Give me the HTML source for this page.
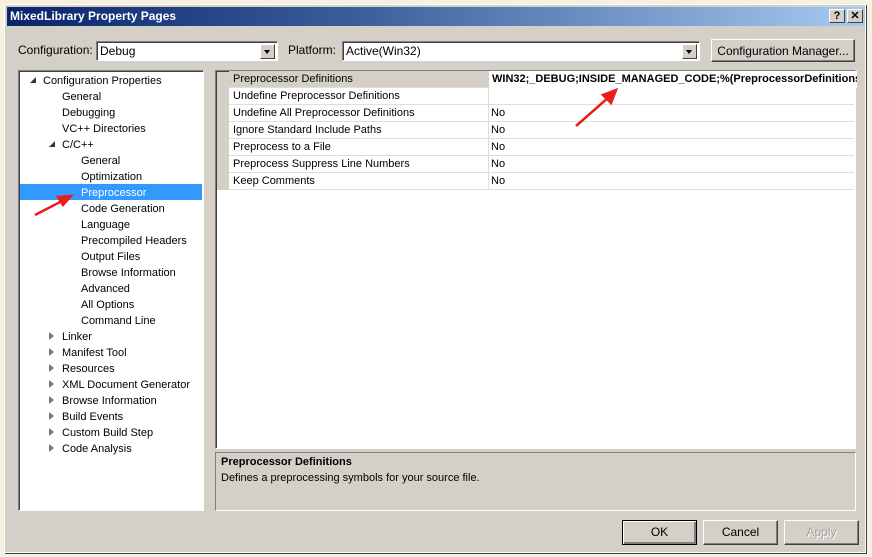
<!DOCTYPE html>
<html><head><style>
body{margin:0;width:872px;height:557px;background:#f4f1de;position:relative;overflow:hidden;font-family:"Liberation Sans",sans-serif;font-size:11px;color:#000}
.a{position:absolute}
.win{left:4px;top:4px;width:862px;height:549px;background:#d4d0c8;border:1px solid #fff;box-shadow:1px 1px 0 #404040;box-sizing:border-box}
.title{left:7px;top:7px;width:858px;height:19px;background:linear-gradient(90deg,#0a246a,#3a5d9a 40%,#a6caf0);color:#fff;font-weight:bold;font-size:12px;line-height:19px;padding-left:3px;box-sizing:border-box}
.tb{width:16px;height:14px;background:#d4d0c8;border:1px solid;border-color:#fff #404040 #404040 #fff;box-sizing:border-box;font-size:11px;font-weight:bold;text-align:center;line-height:12px;color:#000}
.combo{background:#fff;border:1px solid;border-color:#808080 #fff #fff #808080;box-shadow:inset 1px 1px 0 #404040;box-sizing:border-box;line-height:18px;padding-left:3px}
.dd{position:absolute;right:2px;top:2px;width:15px;height:15px;background:#d4d0c8;border:1px solid;border-color:#fff #404040 #404040 #fff;box-sizing:border-box}
.dd:after{content:"";position:absolute;left:3px;top:5px;border:3.5px solid transparent;border-top:4px solid #000}
.btn{background:#d4d0c8;border:1px solid;border-color:#fff #404040 #404040 #fff;box-shadow:inset -1px -1px 0 #808080;box-sizing:border-box;text-align:center;line-height:22px;font-size:12px}
.sunk{border:1px solid;border-color:#808080 #fff #fff #808080;box-shadow:inset 1px 1px 0 #404040;box-sizing:border-box}
.tr{position:absolute;height:16px;line-height:18px;white-space:nowrap}
.row{position:absolute;left:229px;width:625px;height:17px;border-bottom:1px solid #e0ded8;box-sizing:border-box;line-height:17px}
.row span{position:absolute}
.row .n{left:4px}.row .v{left:262px}
.row .sep{position:absolute;left:259px;top:0;width:1px;height:17px;background:#e0ded8}
.ex,.co{position:absolute;width:0;height:0}
.co{border-left:6px solid transparent;border-bottom:6px solid #333;border-right:0}
.ex{border-top:4px solid transparent;border-bottom:4px solid transparent;border-left:5px solid #777}
</style></head><body>
<div class="a win"></div>
<div class="a title">MixedLibrary Property Pages</div>
<div class="a tb" style="left:829px;top:9px">?</div>
<div class="a tb" style="left:847px;top:9px">✕</div>

<div class="a" style="left:18px;top:43px;font-size:12px">Configuration:</div>
<div class="a combo" style="left:96px;top:41px;width:182px;height:20px;font-size:12px">Debug<div class="dd"></div></div>
<div class="a" style="left:288px;top:43px;font-size:12px">Platform:</div>
<div class="a combo" style="left:342px;top:41px;width:358px;height:20px;font-size:12px">Active(Win32)<div class="dd"></div></div>
<div class="a btn" style="left:711px;top:39px;width:144px;height:23px">Configuration Manager...</div>

<div class="a sunk" style="left:18px;top:70px;width:186px;height:441px;background:#fff"></div>
<div class="a" style="left:20px;top:184px;width:182px;height:16px;background:#3399ff"></div>
<div class="co" style="left:30px;top:77px;position:absolute"></div>
<div class="co" style="left:49px;top:141px;position:absolute"></div>
<div class="tr" style="left:43px;top:72px">Configuration Properties</div>
<div class="tr" style="left:62px;top:88px">General</div>
<div class="tr" style="left:62px;top:104px">Debugging</div>
<div class="tr" style="left:62px;top:120px">VC++ Directories</div>
<div class="tr" style="left:62px;top:136px">C/C++</div>
<div class="tr" style="left:81px;top:152px">General</div>
<div class="tr" style="left:81px;top:168px">Optimization</div>
<div class="tr" style="left:81px;top:184px;color:#fff">Preprocessor</div>
<div class="tr" style="left:81px;top:200px">Code Generation</div>
<div class="tr" style="left:81px;top:216px">Language</div>
<div class="tr" style="left:81px;top:232px">Precompiled Headers</div>
<div class="tr" style="left:81px;top:248px">Output Files</div>
<div class="tr" style="left:81px;top:264px">Browse Information</div>
<div class="tr" style="left:81px;top:280px">Advanced</div>
<div class="tr" style="left:81px;top:296px">All Options</div>
<div class="tr" style="left:81px;top:312px">Command Line</div>
<div class="tr" style="left:62px;top:328px">Linker</div>
<div class="tr" style="left:62px;top:344px">Manifest Tool</div>
<div class="tr" style="left:62px;top:360px">Resources</div>
<div class="tr" style="left:62px;top:376px">XML Document Generator</div>
<div class="tr" style="left:62px;top:392px">Browse Information</div>
<div class="tr" style="left:62px;top:408px">Build Events</div>
<div class="tr" style="left:62px;top:424px">Custom Build Step</div>
<div class="tr" style="left:62px;top:440px">Code Analysis</div>
<div class="ex" style="left:49px;top:332px"></div>
<div class="ex" style="left:49px;top:348px"></div>
<div class="ex" style="left:49px;top:364px"></div>
<div class="ex" style="left:49px;top:380px"></div>
<div class="ex" style="left:49px;top:396px"></div>
<div class="ex" style="left:49px;top:412px"></div>
<div class="ex" style="left:49px;top:428px"></div>
<div class="ex" style="left:49px;top:444px"></div>

<div class="a sunk" style="left:215px;top:70px;width:641px;height:379px;background:#fff"></div>
<div class="a" style="left:217px;top:72px;width:12px;height:118px;background:#d4d0c8"></div>
<div class="row" style="top:71px;background:#d4d0c8"><span class="n">Preprocessor Definitions</span><span class="v" style="font-weight:bold;font-size:11px;left:260px;background:#fff;width:365px;height:17px;top:0;padding-left:3px;white-space:nowrap;overflow:hidden">WIN32;_DEBUG;INSIDE_MANAGED_CODE;%(PreprocessorDefinitions)</span></div>
<div class="row" style="top:88px"><div class="sep"></div><span class="n">Undefine Preprocessor Definitions</span></div>
<div class="row" style="top:105px"><div class="sep"></div><span class="n">Undefine All Preprocessor Definitions</span><span class="v">No</span></div>
<div class="row" style="top:122px"><div class="sep"></div><span class="n">Ignore Standard Include Paths</span><span class="v">No</span></div>
<div class="row" style="top:139px"><div class="sep"></div><span class="n">Preprocess to a File</span><span class="v">No</span></div>
<div class="row" style="top:156px"><div class="sep"></div><span class="n">Preprocess Suppress Line Numbers</span><span class="v">No</span></div>
<div class="row" style="top:173px"><div class="sep"></div><span class="n">Keep Comments</span><span class="v">No</span></div>

<div class="a sunk" style="left:215px;top:452px;width:641px;height:59px;background:#d4d0c8;box-shadow:none"></div>
<div class="a" style="left:221px;top:456px;font-weight:bold">Preprocessor Definitions</div>
<div class="a" style="left:221px;top:472px">Defines a preprocessing symbols for your source file.</div>

<div class="a btn" style="left:622px;top:520px;width:75px;height:25px;border:1px solid #000;box-shadow:inset 1px 1px 0 #fff,inset -2px -2px 0 #808080">OK</div>
<div class="a btn" style="left:703px;top:520px;width:75px;height:25px">Cancel</div>
<div class="a btn" style="left:784px;top:520px;width:75px;height:25px;color:#a0a0a0;text-shadow:1px 1px 0 #fff">Apply</div>

<svg class="a" style="left:0;top:0" width="872" height="557">
<g stroke="#e8201c" stroke-width="2.5" fill="#e8201c">
<line x1="35" y1="215" x2="64" y2="200"/>
<polygon points="71,196 58,197 63,205"/>
<line x1="576" y1="126" x2="609" y2="97"/>
<polygon points="616,90 603,95 611,103"/>
</g></svg>
</body></html>
